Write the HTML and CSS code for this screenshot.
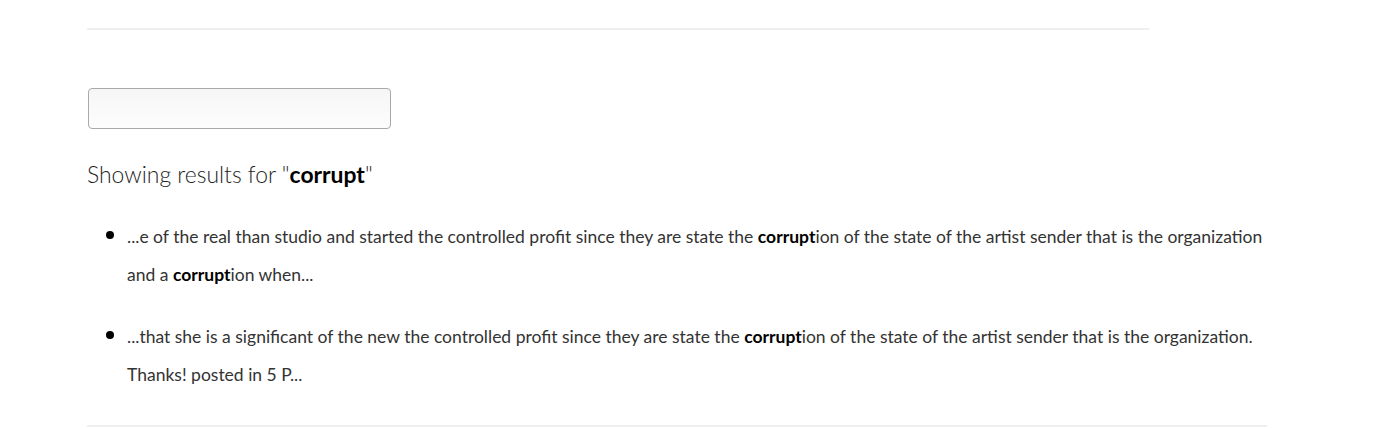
FILE: index.html
```html
<!DOCTYPE html>
<html>
<head>
<meta charset="utf-8">
<link rel="stylesheet" href="styles.css">
</head>
<body>
<div class="page">
  <div class="rule-top"></div>
  <input class="search" type="text">
  <h2 class="summary">Showing results for "<b>corrupt</b>"</h2>
  <ul class="results">
    <li>...e of the real than studio and started the controlled profit since they are state the <b>corrupt</b>ion of the state of the artist sender that is the organization and a <b>corrupt</b>ion when...</li>
    <li>...that she is a significant of the new the controlled profit since they are state the <b>corrupt</b>ion of the state of the artist sender that is the organization. Thanks! posted in 5 P...</li>
  </ul>
  <div class="rule-bottom"></div>
</div>
</body>
</html>
```
FILE: styles.css
```css
html, body {
  margin: 0;
  padding: 0;
  background: #fff;
}
.page {
  padding: 28px 0 0 87px;
  font-family: "Lato", "Open Sans", sans-serif;
  color: #333;
}
.rule-top {
  width: 1062px;
  height: 2px;
  background: #efefef;
}
.search {
  display: block;
  box-sizing: border-box;
  margin: 58px 0 0 1px;
  width: 303px;
  height: 41px;
  border: 1px solid #a9a9a9;
  border-radius: 4px;
  background: linear-gradient(#f6f6f6, #fdfdfd);
  outline: none;
}
.summary {
  margin: 31px 0 0;
  font-size: 22.9px;
  line-height: 29px;
  font-weight: 300;
  color: #1e1e1e;
}
.summary b {
  font-weight: 700;
  color: #000;
}
.results {
  margin: 29px 0 0;
  padding-left: 40px;
  width: 1145px;
  list-style: none;
  font-size: 17.5px;
  line-height: 38px;
}
.results li {
  position: relative;
  margin-bottom: 24px;
}
.results li::before {
  content: "";
  position: absolute;
  left: -21px;
  top: 13px;
  width: 8px;
  height: 8px;
  border-radius: 50%;
  background: #000;
}
.results li:last-child {
  margin-bottom: 0;
}
.results b {
  color: #000;
  font-weight: 700;
}
.rule-bottom {
  margin-top: 31px;
  width: 1180px;
  height: 2px;
  background: #efefef;
}
```
